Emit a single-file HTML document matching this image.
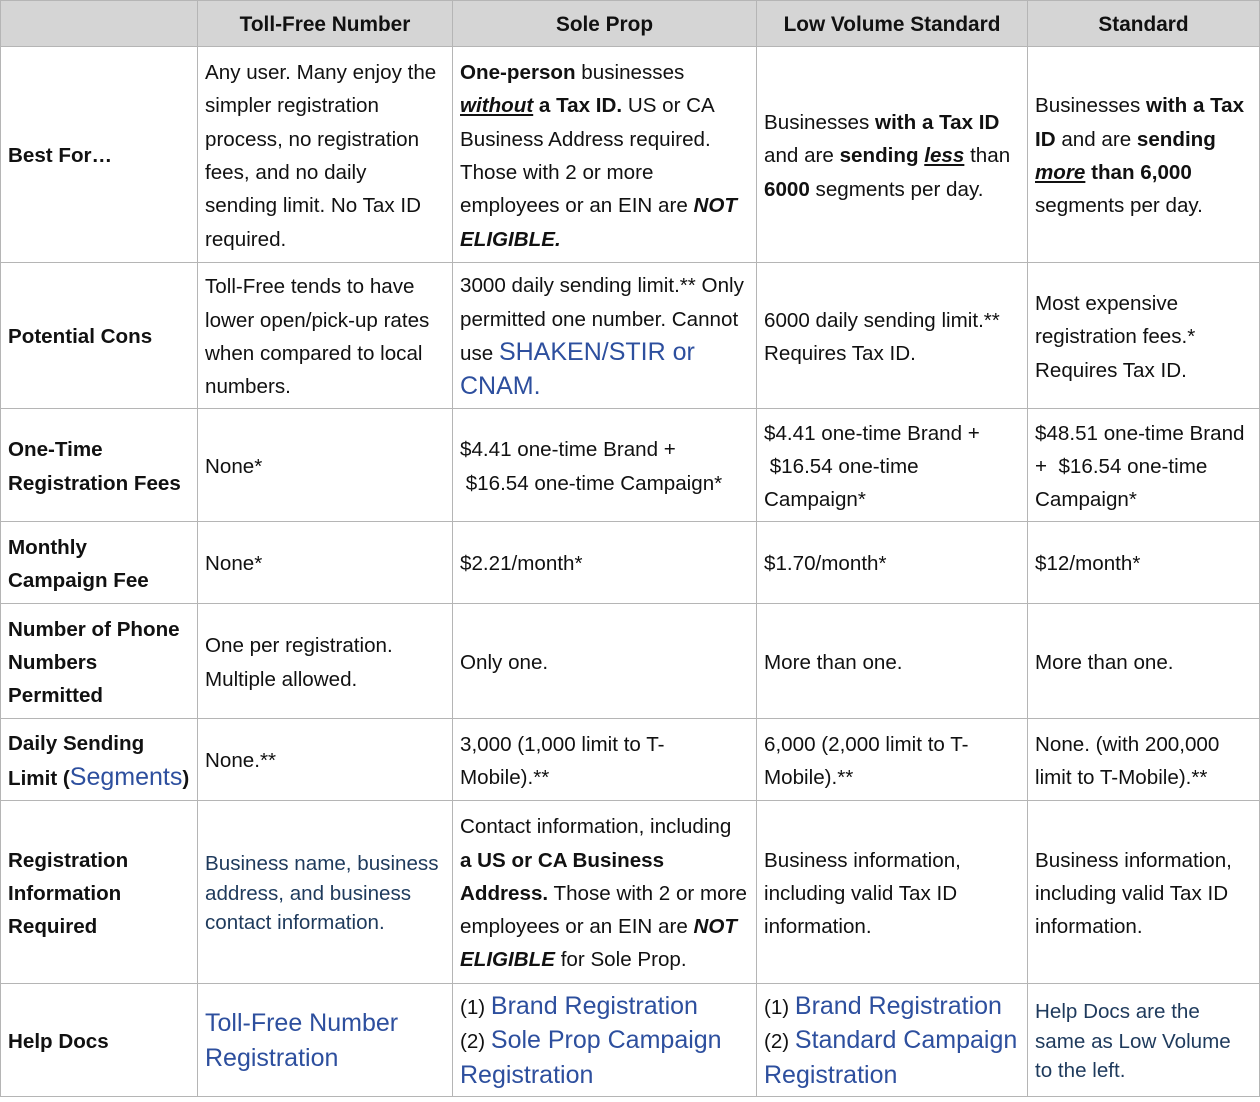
<!DOCTYPE html>
<html><head><meta charset="utf-8"><style>
body{margin:0;background:#fff;width:1260px;height:1102px;overflow:hidden}
table{border-collapse:collapse;table-layout:fixed;position:absolute;left:0;top:0;width:1259px;font-family:"Liberation Sans",Arial,sans-serif;font-size:20.6px;color:#111}
td,th{border:1px solid #b5b5b5;padding:3px 0 0 7px;vertical-align:middle;line-height:33.3px;text-align:left;white-space:nowrap;overflow:hidden}
th{background:#d5d5d5;text-align:center;font-weight:bold;height:43px;padding:2px 0 0 0;font-size:20.8px}
td.h{font-weight:bold}
a{color:#2d4f9e;text-decoration:none;font-size:25px;line-height:33px}
.dk{color:#1e3a5c;line-height:29.5px}
</style></head><body>
<table>
<colgroup><col style="width:197px"><col style="width:255px"><col style="width:304px"><col style="width:271px"><col style="width:232px"></colgroup>
<tr><th></th><th>Toll-Free Number</th><th>Sole Prop</th><th>Low Volume Standard</th><th>Standard</th></tr>
<tr style="height:216px"><td class="h">Best For…</td><td>Any user. Many enjoy the<br>simpler registration<br>process, no registration<br>fees, and no daily<br>sending limit. No Tax ID<br>required.</td><td><b>One-person</b> businesses<br><b><i><u>without</u></i> a Tax ID.</b> US or CA<br>Business Address required.<br>Those with 2 or more<br>employees or an EIN are <b><i>NOT</i></b><br><b><i>ELIGIBLE.</i></b></td><td>Businesses <b>with a Tax ID</b><br>and are <b>sending <i><u>less</u></i></b> than<br><b>6000</b> segments per day.</td><td>Businesses <b>with a Tax</b><br><b>ID</b> and are <b>sending</b><br><b><i><u>more</u></i> than 6,000</b><br>segments per day.</td></tr>
<tr style="height:146px"><td class="h">Potential Cons</td><td>Toll-Free tends to have<br>lower open/pick-up rates<br>when compared to local<br>numbers.</td><td>3000 daily sending limit.** Only<br>permitted one number. Cannot<br>use <a>SHAKEN/STIR or</a><br><a>CNAM.</a></td><td>6000 daily sending limit.**<br>Requires Tax ID.</td><td>Most expensive<br>registration fees.*<br>Requires Tax ID.</td></tr>
<tr style="height:113px"><td class="h">One-Time<br>Registration Fees</td><td>None*</td><td>$4.41 one-time Brand +<br>&nbsp;$16.54 one-time Campaign*</td><td>$4.41 one-time Brand +<br>&nbsp;$16.54 one-time<br>Campaign*</td><td>$48.51 one-time Brand<br>+&nbsp; $16.54 one-time<br>Campaign*</td></tr>
<tr style="height:82px"><td class="h">Monthly<br>Campaign Fee</td><td>None*</td><td>$2.21/month*</td><td>$1.70/month*</td><td>$12/month*</td></tr>
<tr style="height:115px"><td class="h">Number of Phone<br>Numbers<br>Permitted</td><td>One per registration.<br>Multiple allowed.</td><td>Only one.</td><td>More than one.</td><td>More than one.</td></tr>
<tr style="height:82px"><td class="h">Daily Sending<br>Limit (<a style="font-weight:normal">Segments</a>)</td><td>None.**</td><td>3,000 (1,000 limit to T-<br>Mobile).**</td><td>6,000 (2,000 limit to T-<br>Mobile).**</td><td>None. (with 200,000<br>limit to T-Mobile).**</td></tr>
<tr style="height:183px"><td class="h">Registration<br>Information<br>Required</td><td class="dk">Business name, business<br>address, and business<br>contact information.</td><td>Contact information, including<br><b>a US or CA Business</b><br><b>Address.</b> Those with 2 or more<br>employees or an EIN are <b><i>NOT</i></b><br><b><i>ELIGIBLE</i></b> for Sole Prop.</td><td>Business information,<br>including valid Tax ID<br>information.</td><td>Business information,<br>including valid Tax ID<br>information.</td></tr>
<tr style="height:113px"><td class="h">Help Docs</td><td><a>Toll-Free Number</a><br><a>Registration</a></td><td>(1) <a>Brand Registration</a><br>(2) <a>Sole Prop Campaign</a><br><a>Registration</a></td><td>(1) <a>Brand Registration</a><br>(2) <a>Standard Campaign</a><br><a>Registration</a></td><td class="dk">Help Docs are the<br>same as Low Volume<br>to the left.</td></tr>
</table>
</body></html>
